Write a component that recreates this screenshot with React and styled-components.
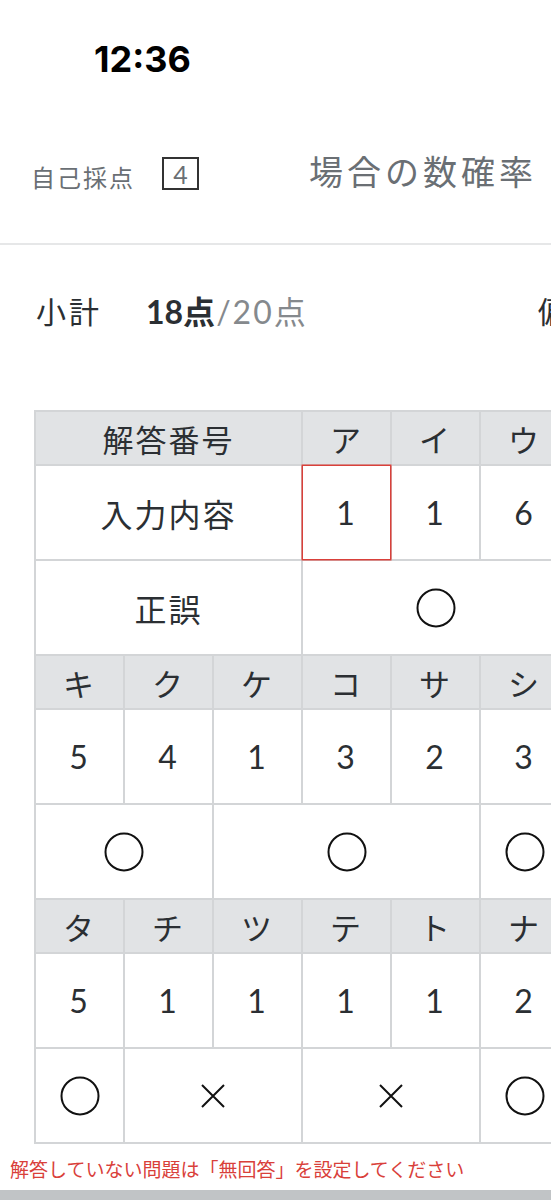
import React from 'react';
import styled, { createGlobalStyle } from 'styled-components';

const Colors = {
  text: '#2b2f33',
  sub: '#6a6f74',
  line: '#d3d5d7',
  head: '#e1e3e5',
  red: '#d9403a',
};

const CELL = 87;
const GAP = 2;

const groups = [
  {
    header: [{ text: '解答番号', span: 3 }, 'ア', 'イ', 'ウ', 'エ', 'オ', 'カ'],
    values: [{ text: '入力内容', span: 3 }, { text: '1', focus: true }, '1', '6', '2', '3', '6'],
    marks: [{ text: '正誤', span: 3 }, { mark: 'o', span: 3 }, { mark: 'o', span: 3 }],
  },
  {
    header: ['キ', 'ク', 'ケ', 'コ', 'サ', 'シ', 'ス', 'セ', 'ソ'],
    values: ['5', '4', '1', '3', '2', '3', '4', '1', '2'],
    marks: [{ mark: 'o', span: 2 }, { mark: 'o', span: 3 }, { mark: 'o', span: 1 }, { mark: 'o', span: 3 }],
  },
  {
    header: ['タ', 'チ', 'ツ', 'テ', 'ト', 'ナ', 'ニ', 'ヌ', 'ネ'],
    values: ['5', '1', '1', '1', '1', '2', '3', '1', '4'],
    marks: [{ mark: 'o', span: 1 }, { mark: 'x', span: 2 }, { mark: 'x', span: 2 }, { mark: 'o', span: 1 }, { mark: 'o', span: 3 }],
  },
];

function norm(c) {
  return typeof c === 'string' ? { text: c, span: 1 } : { span: 1, ...c };
}

function Mark({ type }) {
  if (type === 'x') {
    return (
      <svg width="26" height="26" viewBox="0 0 26 26" aria-label="×">
        <path d="M2 2 L24 24 M24 2 L2 24" stroke="#111" strokeWidth="2" fill="none" />
      </svg>
    );
  }
  return (
    <svg width="40" height="40" viewBox="0 0 40 40" aria-label="○">
      <circle cx="20" cy="20" r="18.5" stroke="#111" strokeWidth="2" fill="none" />
    </svg>
  );
}

export default function App() {
  return (
    <Page>
      <GlobalStyle />
      <StatusBar>
        <Time>12:36</Time>
      </StatusBar>
      <HeaderBar>
        <SelfLabel>自己採点</SelfLabel>
        <ScoreBox>4</ScoreBox>
        <Subject>場合の数確率</Subject>
      </HeaderBar>
      <SubtotalRow>
        <SubLabel>小計</SubLabel>
        <Score>
          <strong>18点</strong>
          <span>/20点</span>
        </Score>
        <SideLabel>偏差値</SideLabel>
      </SubtotalRow>
      <TableWrap>
        <Grid>
          {groups.map((g, gi) => (
            <React.Fragment key={gi}>
              {g.header.map(norm).map((c, i) => (
                <HeadCell key={`h${i}`} $span={c.span}>{c.text}</HeadCell>
              ))}
              {g.values.map(norm).map((c, i) => (
                <ValueCell key={`v${i}`} $span={c.span} $focus={c.focus}>{c.text}</ValueCell>
              ))}
              {g.marks.map(norm).map((c, i) => (
                <ValueCell key={`m${i}`} $span={c.span}>
                  {c.mark ? <Mark type={c.mark} /> : c.text}
                </ValueCell>
              ))}
            </React.Fragment>
          ))}
        </Grid>
      </TableWrap>
      <Notice>解答していない問題は「無回答」を設定してください</Notice>
      <BottomBar />
    </Page>
  );
}

const GlobalStyle = createGlobalStyle`
  html, body {
    margin: 0;
    padding: 0;
    background: #fff;
  }
  body {
    font-family: Lato, "Noto Sans CJK JP", sans-serif;
    color: ${Colors.text};
  }
`;

const Page = styled.div`
  width: 551px;
  min-height: 1200px;
  overflow: hidden;
  background: #fff;
`;

const StatusBar = styled.div`
  height: 120px;
  padding: 37px 0 0 94px;
  box-sizing: border-box;
`;

const Time = styled.div`
  font-family: Inter, Roboto, sans-serif;
  font-weight: 700;
  font-size: 36px;
  line-height: 44px;
  color: #000;
`;

const HeaderBar = styled.div`
  display: flex;
  align-items: center;
  height: 125px;
  padding: 0 0 20px 31px;
  box-sizing: border-box;
  border-bottom: 2px solid #e6e7e8;
`;

const SelfLabel = styled.span`
  font-family: "Noto Sans CJK JP", sans-serif;
  font-size: 24px;
  letter-spacing: 2px;
  color: ${Colors.sub};
  margin-top: 10px;
`;

const ScoreBox = styled.span`
  display: flex;
  align-items: center;
  justify-content: center;
  width: 37px;
  height: 33px;
  box-sizing: border-box;
  margin-left: 27px;
  margin-top: 4px;
  border: 2px solid #333;
  font-family: Lato, sans-serif;
  font-size: 25px;
  color: ${Colors.sub};
`;

const Subject = styled.span`
  margin-left: 110px;
  margin-bottom: 3px;
  font-family: "Noto Sans CJK JP", sans-serif;
  font-size: 34px;
  letter-spacing: 4px;
  color: ${Colors.sub};
  white-space: nowrap;
`;

const SubtotalRow = styled.div`
  display: flex;
  align-items: center;
  height: 130px;
  padding-left: 36px;
  white-space: nowrap;
`;

const SubLabel = styled.span`
  font-family: "Noto Sans CJK JP", sans-serif;
  font-size: 30px;
  letter-spacing: 3px;
  color: ${Colors.text};
`;

const Score = styled.span`
  margin-left: 44px;
  font-size: 32px;
  strong {
    font-weight: 700;
    color: ${Colors.text};
  }
  span {
    margin-left: 1px;
    letter-spacing: 2px;
    color: #85898d;
  }
`;

const SideLabel = styled.span`
  margin-left: 230px;
  font-family: "Noto Sans CJK JP", sans-serif;
  font-size: 30px;
  color: ${Colors.text};
`;

const TableWrap = styled.div`
  margin-top: 35px;
  padding-left: 34px;
`;

const Grid = styled.div`
  display: grid;
  width: max-content;
  grid-template-columns: repeat(9, ${CELL}px);
  grid-auto-rows: 52px 93px 93px;
  gap: ${GAP}px;
  padding: ${GAP}px;
  background: ${Colors.line};
`;

const Cell = styled.div`
  grid-column: span ${p => p.$span};
  display: flex;
  align-items: center;
  justify-content: center;
  font-size: 32px;
  letter-spacing: 2px;
  color: ${Colors.text};
  white-space: nowrap;
`;

const HeadCell = styled(Cell)`
  background: ${Colors.head};
  font-size: 31px;
`;

const ValueCell = styled(Cell)`
  background: #fff;
  box-shadow: ${p => (p.$focus ? `0 0 0 1.5px ${Colors.red}` : 'none')};
  position: relative;
`;

const Notice = styled.div`
  margin: 13px 0 0 10px;
  font-family: "Noto Sans CJK JP", sans-serif;
  font-size: 19px;
  line-height: 24px;
  color: ${Colors.red};
`;

const BottomBar = styled.div`
  margin-top: 9px;
  height: 10px;
  background: #c1c4c6;
`;
